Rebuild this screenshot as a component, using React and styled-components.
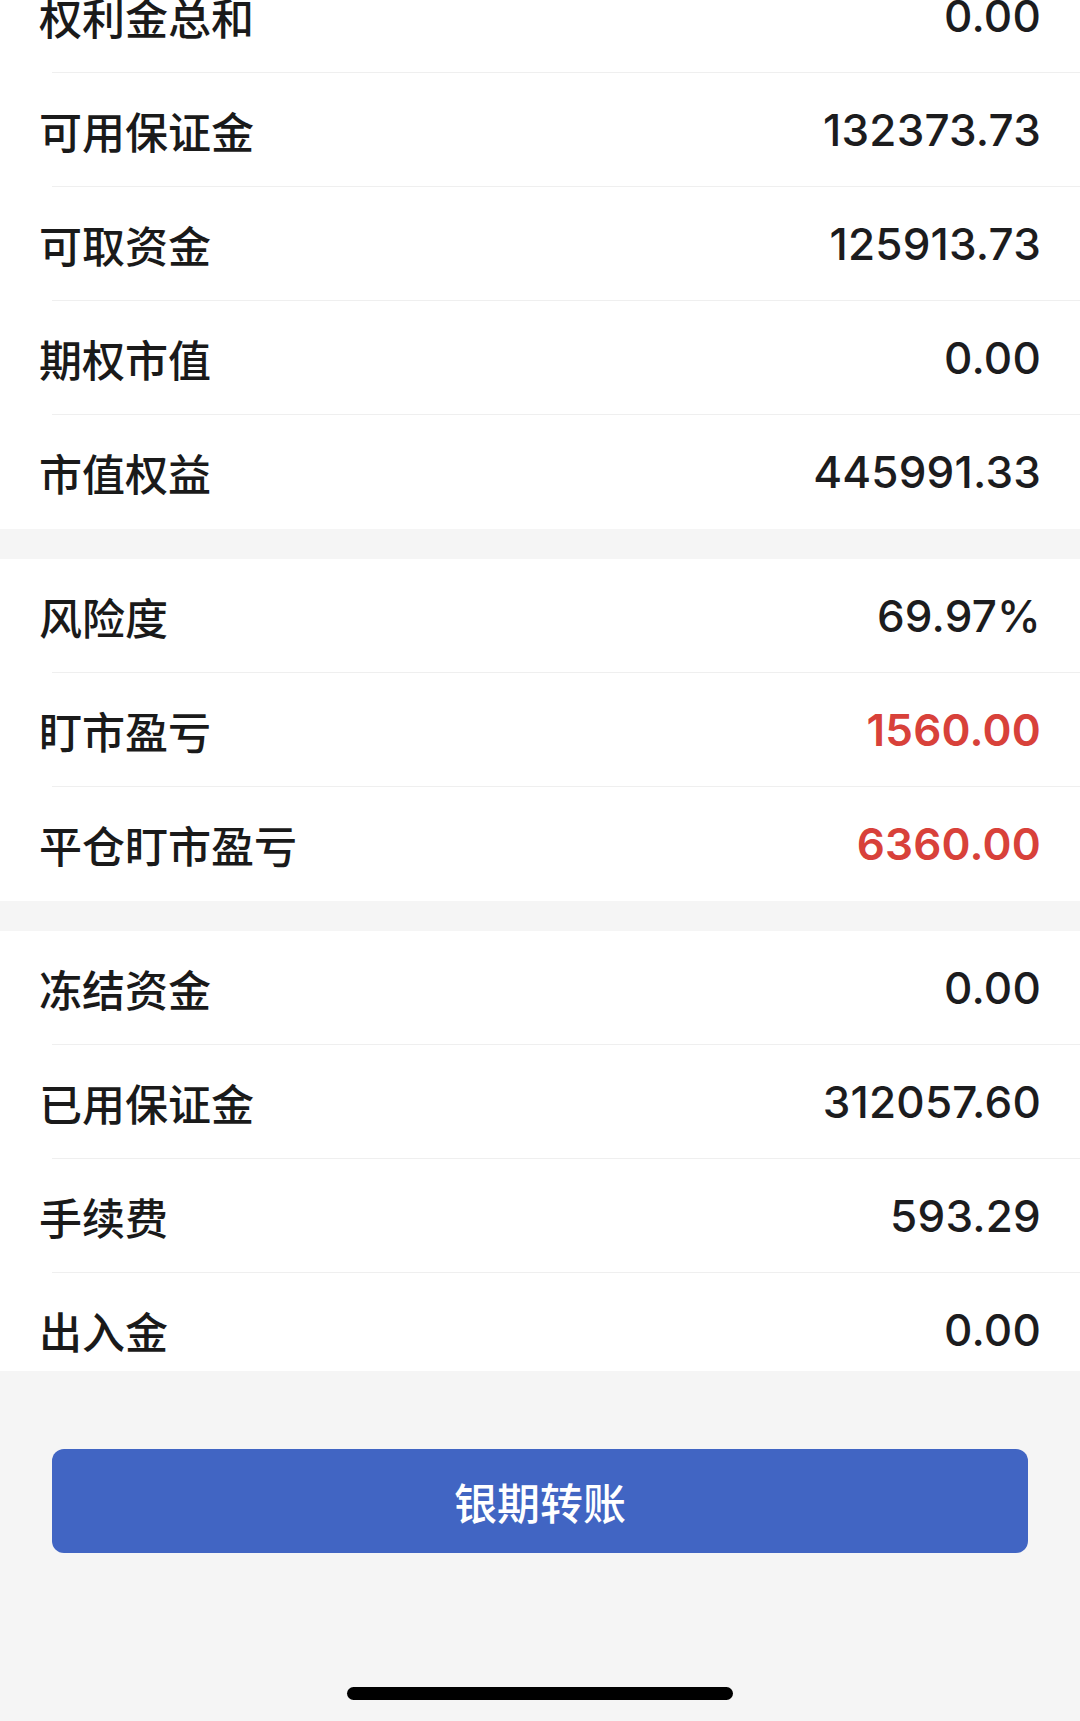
import React from "react";
import styled, { createGlobalStyle } from "styled-components";

const sections = [
  [
    { label: "权利金总和", value: "0.00" },
    { label: "可用保证金", value: "132373.73" },
    { label: "可取资金", value: "125913.73" },
    { label: "期权市值", value: "0.00" },
    { label: "市值权益", value: "445991.33" },
  ],
  [
    { label: "风险度", value: "69.97%" },
    { label: "盯市盈亏", value: "1560.00", up: true },
    { label: "平仓盯市盈亏", value: "6360.00", up: true },
  ],
  [
    { label: "冻结资金", value: "0.00" },
    { label: "已用保证金", value: "312057.60" },
    { label: "手续费", value: "593.29" },
    { label: "出入金", value: "0.00" },
  ],
];

const App = () => {
  return (
    <Page>
      <GlobalStyle />
      <Viewport>
        <List>
          {sections.map((rows, i) => (
            <Section key={i}>
              {rows.map(row => (
                <Row key={row.label}>
                  <Label>{row.label}</Label>
                  <Value up={row.up}>{row.value}</Value>
                </Row>
              ))}
            </Section>
          ))}
        </List>
      </Viewport>
      <Footer>
        <TransferButton>银期转账</TransferButton>
        <HomeIndicator />
      </Footer>
    </Page>
  );
};

const GlobalStyle = createGlobalStyle`
  html, body {
    margin: 0;
    padding: 0;
    background: #f5f5f5;
  }
  * {
    box-sizing: border-box;
  }
`;
const Page = styled.div`
  width: 1080px;
  height: 1721px;
  display: flex;
  flex-direction: column;
  background: #f5f5f5;
  overflow: hidden;
  font-family: "Noto Sans CJK SC", "Noto Sans", sans-serif;
`;
const Viewport = styled.div`
  height: 1371px;
  overflow: hidden;
  flex-shrink: 0;
`;
// scrolled list: first row is partly out of view
const List = styled.div`
  margin-top: -41px;
  display: flex;
  flex-direction: column;
  gap: 30px;
`;
const Section = styled.div`
  background: #ffffff;
  display: flex;
  flex-direction: column;
`;
const Row = styled.div`
  position: relative;
  height: 114px;
  display: flex;
  align-items: center;
  justify-content: space-between;
  padding: 0 39px 0 39px;
  &:not(:last-child)::after {
    content: "";
    position: absolute;
    left: 52px;
    right: 0;
    bottom: 0;
    height: 1px;
    background: #efefef;
  }
`;
const Label = styled.span`
  font-family: "Noto Sans CJK SC", sans-serif;
  font-size: 43px;
  font-weight: 500;
  color: #1a1a1a;
`;
const Value = styled.span`
  font-family: Inter, "Noto Sans", sans-serif;
  font-size: 44px;
  font-weight: ${props => (props.up ? 600 : 500)};
  color: ${props => (props.up ? "#d8413a" : "#1c1c1e")};
  letter-spacing: 0.2px;
`;
const Footer = styled.div`
  flex: 1;
  display: flex;
  flex-direction: column;
  align-items: center;
  padding-top: 78px;
  padding-bottom: 21px;
`;
const TransferButton = styled.button`
  width: 976px;
  height: 104px;
  border: none;
  border-radius: 12px;
  background: #4165c3;
  color: #ffffff;
  font-family: "Noto Sans CJK SC", sans-serif;
  font-size: 43px;
  font-weight: 500;
`;
const HomeIndicator = styled.div`
  margin-top: auto;
  width: 386px;
  height: 13px;
  border-radius: 7px;
  background: #000000;
`;

export default App;
